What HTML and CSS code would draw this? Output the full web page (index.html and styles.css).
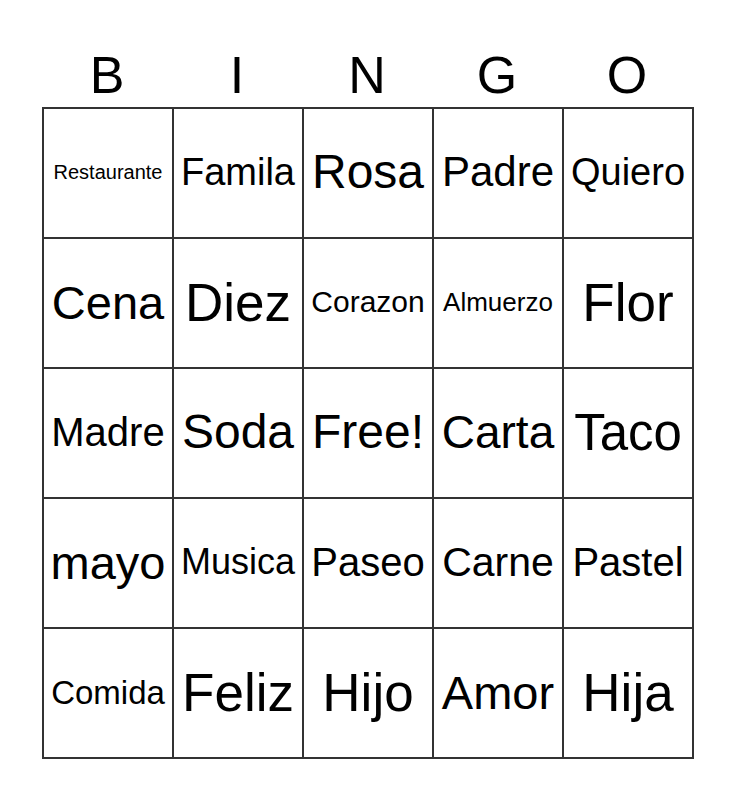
FILE: index.html
```html
<!DOCTYPE html>
<html>
<head>
<meta charset="utf-8">
<link rel="stylesheet" href="styles.css">
</head>
<body>
<div class="card">
  <div class="head">
    <span>B</span><span>I</span><span>N</span><span>G</span><span>O</span>
  </div>
  <div class="grid">
    <div class="cell f20">Restaurante</div>
    <div class="cell f38">Famila</div>
    <div class="cell f48">Rosa</div>
    <div class="cell f42">Padre</div>
    <div class="cell f38">Quiero</div>

    <div class="cell f47">Cena</div>
    <div class="cell f53">Diez</div>
    <div class="cell f30">Corazon</div>
    <div class="cell f26">Almuerzo</div>
    <div class="cell f53">Flor</div>

    <div class="cell f40">Madre</div>
    <div class="cell f48">Soda</div>
    <div class="cell f48">Free!</div>
    <div class="cell f46">Carta</div>
    <div class="cell f51">Taco</div>

    <div class="cell f47">mayo</div>
    <div class="cell f36">Musica</div>
    <div class="cell f40">Paseo</div>
    <div class="cell f41">Carne</div>
    <div class="cell f40">Pastel</div>

    <div class="cell f33">Comida</div>
    <div class="cell f53">Feliz</div>
    <div class="cell f53">Hijo</div>
    <div class="cell f47">Amor</div>
    <div class="cell f53">Hija</div>
  </div>
</div>
</body>
</html>
```
FILE: styles.css
```css
html, body {
  margin: 0;
  padding: 0;
  background: #fff;
}
body {
  font-family: "Liberation Sans", Arial, sans-serif;
  color: #000;
}
.card {
  padding: 49px 0 0 42px;
}
.head {
  display: grid;
  grid-template-columns: repeat(5, 130px);
  width: 652px;
  font-size: 52px;
  line-height: 52px;
  height: 58px;
}
.head span {
  text-align: center;
}
.grid {
  display: grid;
  grid-template-columns: repeat(5, 130px);
  grid-template-rows: repeat(5, 130px);
  border-left: 2px solid #333;
  border-top: 2px solid #333;
  width: 650px;
}
.cell {
  box-sizing: border-box;
  border-right: 2px solid #333;
  border-bottom: 2px solid #333;
  display: flex;
  align-items: center;
  justify-content: center;
  text-align: center;
  line-height: 1;
  padding-bottom: 2px;
  white-space: nowrap;
  overflow: hidden;
}
.f20 { font-size: 20px; }
.f26 { font-size: 26px; }
.f30 { font-size: 30px; }
.f33 { font-size: 33px; }
.f36 { font-size: 36px; }
.f38 { font-size: 38px; }
.f40 { font-size: 40px; }
.f41 { font-size: 41px; }
.f42 { font-size: 42px; }
.f46 { font-size: 46px; }
.f47 { font-size: 47px; }
.f48 { font-size: 48px; }
.f51 { font-size: 51px; }
.f53 { font-size: 53px; }
```
